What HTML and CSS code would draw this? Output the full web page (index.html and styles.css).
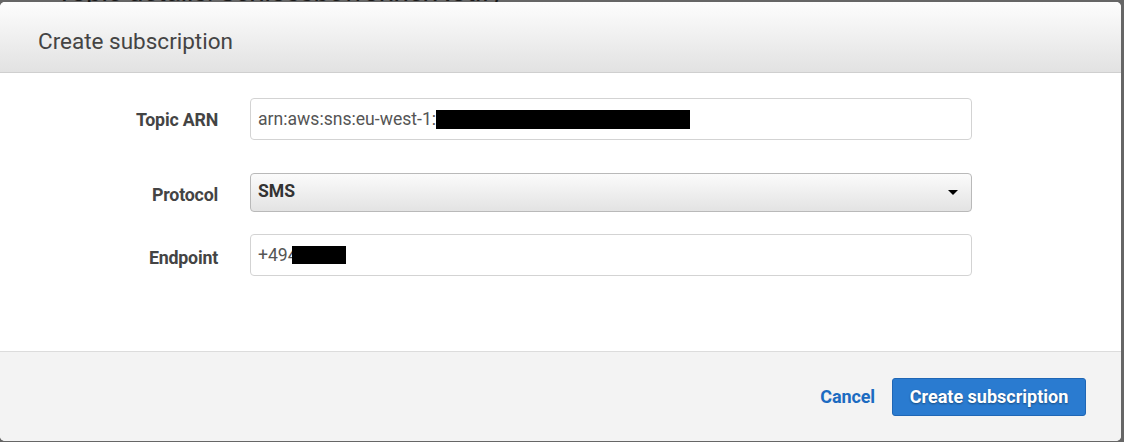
FILE: index.html
```html
<!DOCTYPE html>
<html lang="en">
  <head>
    <meta charset="UTF-8" />
    <meta name="viewport" content="width=device-width, initial-scale=1.0"/>
    <title>Create subscription</title>
    <link rel="stylesheet" href="styles.css">
  </head>
  <body>
    <div class="page">
      <h1 class="page-title">Topic details: SchlossbewohnerNotify</h1>
    </div>

    <div class="modal">
      <div class="modal-header">
        <h2>Create subscription</h2>
      </div>

      <div class="modal-body">
        <div class="row row-arn">
          <label class="label">Topic ARN</label>
          <div class="field">
            <span>arn:aws:sns:eu-west-1:</span><span class="redact redact-arn"></span>
          </div>
        </div>
        <div class="row row-protocol">
          <label class="label">Protocol</label>
          <div class="field select">
            <span>SMS</span>
            <span class="caret"></span>
          </div>
        </div>
        <div class="row row-endpoint">
          <label class="label">Endpoint</label>
          <div class="field">
            <span>+494</span><span class="redact redact-phone"></span>
          </div>
        </div>
      </div>

      <div class="modal-footer">
        <a class="cancel" href="#">Cancel</a>
        <button class="primary">Create subscription</button>
      </div>
    </div>
  </body>
</html>
```

FILE: styles.css
```css
* {
  box-sizing: border-box;
  margin: 0;
  padding: 0;
}

body {
  font-family: Roboto, 'Liberation Sans', sans-serif;
  background: #666;
  width: 1124px;
  height: 442px;
  overflow: hidden;
  color: #444;
}

.page {
  padding-left: 56px;
}

.page-title {
  font-size: 28px;
  font-weight: normal;
  color: #1a1a1a;
  line-height: 28px;
  margin-top: -22px;
  letter-spacing: -0.6px;
}

.modal {
  position: absolute;
  left: 0;
  top: 2px;
  width: 1121px;
  height: 439px;
  background: #fff;
  border-radius: 5px;
  overflow: hidden;
  display: flex;
  flex-direction: column;
}

.modal-header {
  height: 71px;
  background: linear-gradient(#fdfdfd, #e2e2e2);
  border-bottom: 1px solid #cfcfcf;
  padding: 25px 0 0 38px;
}

.modal-header h2 {
  font-size: 22.5px;
  font-weight: normal;
  color: #444;
  line-height: 28px;
}

.modal-body {
  height: 279px;
  padding-top: 25px;
  border-bottom: 1px solid #dcdcdc;
}

.row {
  display: flex;
  align-items: center;
}

.row-protocol {
  margin-top: 33px;
}

.row-endpoint {
  margin-top: 22px;
}

.label {
  width: 218px;
  text-align: right;
  font-size: 17.8px;
  font-weight: bold;
  color: #444;
  margin-right: 32px;
  letter-spacing: -0.2px;
}

.row-protocol .label,
.row-endpoint .label {
  padding-top: 4px;
}

.field {
  width: 722px;
  height: 42px;
  border: 1px solid #d3d3d3;
  border-radius: 4px;
  background: #fff;
  padding-left: 7px;
  display: flex;
  align-items: center;
  font-size: 17.6px;
  color: #555;
  position: relative;
}

.select {
  height: 39px;
  border-color: #b9b9b9;
  background: linear-gradient(#fbfbfb, #e3e3e3);
  font-weight: bold;
  color: #333;
  padding-bottom: 3px;
}

.caret {
  position: absolute;
  right: 13px;
  top: 16px;
  border-left: 5px solid transparent;
  border-right: 5px solid transparent;
  border-top: 5px solid #000;
}

.redact {
  display: inline-block;
  background: #000;
}

.redact-arn {
  width: 254px;
  height: 19px;
}

.redact-phone {
  width: 54px;
  height: 18px;
  margin-left: -6px;
}

.modal-footer {
  flex: 1;
  background: #f3f3f3;
  display: flex;
  align-items: center;
  justify-content: flex-end;
  padding: 0 35px 0 0;
}

.cancel {
  font-size: 18px;
  font-weight: bold;
  color: #1c6bc1;
  text-decoration: none;
  margin-right: 17px;
  letter-spacing: -0.1px;
}

.primary {
  width: 194px;
  height: 38px;
  background: #2a7bd0;
  border: 1px solid #1f66b5;
  border-radius: 3px;
  color: #fff;
  font-family: Roboto, 'Liberation Sans', sans-serif;
  font-size: 18px;
  font-weight: bold;
  text-shadow: 0 1px 2px rgba(0, 0, 0, 0.4);
}
```
